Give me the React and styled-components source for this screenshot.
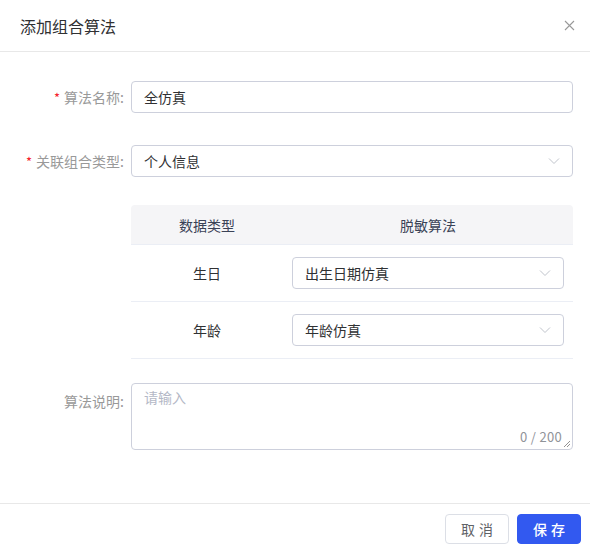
import styled, { createGlobalStyle } from "styled-components";

const GlobalStyle = createGlobalStyle`
  html, body {
    margin: 0;
    padding: 0;
    background: #fff;
    font-family: "Noto Sans CJK SC", "Noto Sans", sans-serif;
  }
`;

const Dialog = styled.div`
  width: 590px;
  height: 552px;
  display: flex;
  flex-direction: column;
  background: #fff;
  box-sizing: border-box;
`;

const Header = styled.div`
  height: 52px;
  box-sizing: border-box;
  border-bottom: 1px solid #e8e8e8;
  display: flex;
  align-items: center;
  justify-content: space-between;
  padding: 0 14px 0 20px;
`;

const Title = styled.div`
  font-size: 16px;
  color: #303133;
`;

const Close = styled.button`
  border: none;
  background: none;
  padding: 0;
  width: 14px;
  height: 14px;
  display: flex;
  align-items: center;
  justify-content: center;
  cursor: pointer;
`;

const Body = styled.div`
  flex: 1;
  padding: 29px 17px 0 0;
  display: flex;
  flex-direction: column;
`;

const FormItem = styled.div`
  display: flex;
  align-items: ${(p) => (p.$top ? "flex-start" : "center")};
  margin-bottom: ${(p) => p.$gap || 0}px;
`;

const Label = styled.label`
  width: 131px;
  flex-shrink: 0;
  box-sizing: border-box;
  padding-right: 7px;
  padding-top: ${(p) => (p.$top ? "8px" : "0")};
  text-align: right;
  font-size: 14px;
  color: #999;
  line-height: 20px;
`;

const Star = styled.span`
  color: #f5222d;
  margin-right: 4px;
  font-size: 13px;
`;

const Input = styled.div`
  flex: 1;
  height: 32px;
  box-sizing: border-box;
  border: 1px solid #cdd0dc;
  border-radius: 4px;
  padding: 0 12px;
  display: flex;
  align-items: center;
  justify-content: space-between;
  font-size: 14px;
  color: #303133;
`;

const Chevron = () => (
  <svg width="12" height="8" viewBox="0 0 12 8" fill="none">
    <path d="M1 1.5 L6 6.5 L11 1.5" stroke="#c0c4cc" strokeWidth="1" />
  </svg>
);

const Table = styled.div`
  margin-left: 131px;
  margin-bottom: 24px;
`;

const Row = styled.div`
  display: grid;
  grid-template-columns: 152px 1fr;
  height: ${(p) => (p.$head ? 40 : 57)}px;
  box-sizing: border-box;
  align-items: center;
  background: ${(p) => (p.$head ? "#f5f5f7" : "#fff")};
  border-radius: ${(p) => (p.$head ? "4px 4px 0 0" : "0")};
  border-bottom: 1px solid #ebeef5;
`;

const Cell = styled.div`
  text-align: center;
  font-size: 14px;
  color: ${(p) => (p.$head ? "#3a4256" : "#303133")};
  padding: 0 9px;
`;

const SelectCell = styled.div`
  padding: 0 9px;
  display: flex;
`;

const TextArea = styled.div`
  flex: 1;
  height: 67px;
  box-sizing: border-box;
  border: 1px solid #cdd0dc;
  border-radius: 4px;
  padding: 3px 12px;
  position: relative;
  font-size: 14px;
  color: #b4b8c6;
`;

const Counter = styled.span`
  position: absolute;
  right: 10px;
  bottom: 3px;
  font-size: 13px;
  letter-spacing: 0.3px;
  color: #909399;
`;

const Resize = styled.svg`
  position: absolute;
  right: 1px;
  bottom: 1px;
`;

const Footer = styled.div`
  height: 49px;
  box-sizing: border-box;
  border-top: 1px solid #e8e8e8;
  display: flex;
  justify-content: flex-end;
  align-items: flex-start;
  gap: 8px;
  padding: 10px 9px 0 0;
`;

const Button = styled.button`
  width: 64px;
  height: 30px;
  box-sizing: border-box;
  border-radius: 4px;
  border: 1px solid ${(p) => (p.$primary ? "#3259f0" : "#dcdfe6")};
  background: ${(p) => (p.$primary ? "#3259f0" : "#fff")};
  color: ${(p) => (p.$primary ? "#fff" : "#606266")};
  font-family: inherit;
  font-size: 14px;
  font-weight: ${(p) => (p.$primary ? 500 : 400)};
  letter-spacing: 4px;
  padding: 0 0 0 4px;
  cursor: pointer;
`;

const rows = [
  { type: "生日", algo: "出生日期仿真" },
  { type: "年龄", algo: "年龄仿真" },
];

export default function App() {
  return (
    <>
      <GlobalStyle />
      <Dialog>
        <Header>
          <Title>添加组合算法</Title>
          <Close>
            <svg width="11" height="11" viewBox="0 0 11 11">
              <path d="M1 1 L10 10 M10 1 L1 10" stroke="#999" strokeWidth="1.1" />
            </svg>
          </Close>
        </Header>
        <Body>
          <FormItem $gap={32}>
            <Label><Star>*</Star>算法名称:</Label>
            <Input>全仿真</Input>
          </FormItem>
          <FormItem $gap={28}>
            <Label><Star>*</Star>关联组合类型:</Label>
            <Input>
              个人信息
              <Chevron />
            </Input>
          </FormItem>
          <Table>
            <Row $head>
              <Cell $head>数据类型</Cell>
              <Cell $head>脱敏算法</Cell>
            </Row>
            {rows.map((r) => (
              <Row key={r.type}>
                <Cell>{r.type}</Cell>
                <SelectCell>
                  <Input>
                    {r.algo}
                    <Chevron />
                  </Input>
                </SelectCell>
              </Row>
            ))}
          </Table>
          <FormItem $top>
            <Label $top>算法说明:</Label>
            <TextArea>
              请输入
              <Counter>0 / 200</Counter>
              <Resize width="8" height="8" viewBox="0 0 8 8">
                <path d="M7 1 L1 7 M7 4 L4 7" stroke="#777" strokeWidth="0.8" />
              </Resize>
            </TextArea>
          </FormItem>
        </Body>
        <Footer>
          <Button>取消</Button>
          <Button $primary>保存</Button>
        </Footer>
      </Dialog>
    </>
  );
}
